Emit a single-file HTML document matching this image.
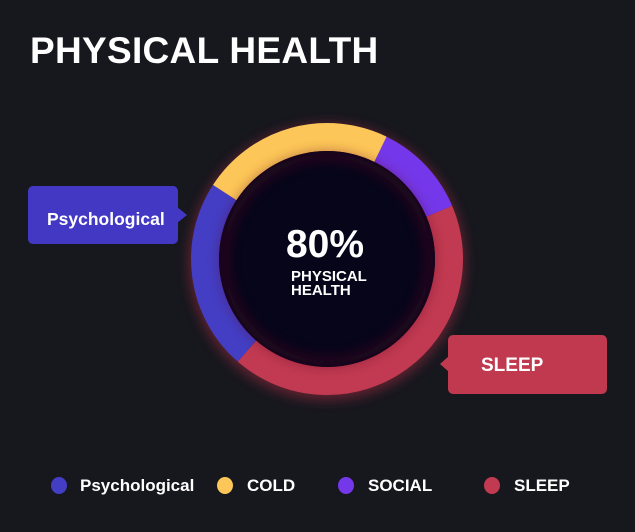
<!DOCTYPE html><html><head><style>
body{margin:0;width:635px;height:532px;background:#17171e;font-family:"Liberation Sans",sans-serif;color:#fff;position:relative;overflow:hidden}
.t{position:absolute;left:30px;top:30px;font-size:37px;font-weight:bold;letter-spacing:0.3px}
.l{position:absolute;top:476px;font-weight:bold;font-size:17px}
.d{position:absolute;top:477px;width:16px;height:17px;border-radius:50%}
</style></head><body>
<div class="t">PHYSICAL HEALTH</div>
<svg width="635" height="532" style="position:absolute;left:0;top:0">
<defs><filter id="g" x="-30%" y="-30%" width="160%" height="160%"><feGaussianBlur stdDeviation="6"/></filter></defs>
<circle cx="327" cy="262" r="128" fill="none" stroke="#c0304a" stroke-width="20" opacity="0.45" filter="url(#g)"/>
<g fill="none" stroke-width="28">
<path d="M224.7 192.6 A122 122 0 0 1 380.5 149.3" stroke="#fdc658"/>
<path d="M380.5 149.3 A122 122 0 0 1 439.3 211.3" stroke="#7438ea"/>
<path d="M439.3 211.3 A122 122 0 0 1 247 351.1" stroke="#c13a51"/>
<path d="M247 351.1 A122 122 0 0 1 224.7 192.6" stroke="#433ec4"/>
</g>
<circle cx="327" cy="259" r="108" fill="#07051a"/>
<circle cx="327" cy="259" r="103" fill="none" stroke="#5a0d24" stroke-width="8" opacity="0.5" filter="url(#g)"/>
<text x="325" y="257" text-anchor="middle" font-family="Liberation Sans" font-weight="bold" font-size="39" fill="#fff">80%</text>
<text x="291" y="281" font-family="Liberation Sans" font-weight="bold" font-size="15" fill="#fff">PHYSICAL</text>
<text x="291" y="295" font-family="Liberation Sans" font-weight="bold" font-size="15" fill="#fff">HEALTH</text>
<rect x="28" y="186" width="150" height="58" rx="5" fill="#4338c4"/>
<path d="M177 207 L187 215 L177 223Z" fill="#4338c4"/>
<rect x="448" y="335" width="159" height="59" rx="5" fill="#c0394f"/>
<path d="M449 356 L440 364 L449 372Z" fill="#c0394f"/>
<text x="47" y="225" font-family="Liberation Sans" font-weight="bold" font-size="17.5" fill="#fff">Psychological</text>
<text x="481" y="371" font-family="Liberation Sans" font-weight="bold" font-size="19" fill="#fff">SLEEP</text>
</svg>
<div class="d" style="left:51px;background:#433ec4"></div><div class="l" style="left:80px">Psychological</div>
<div class="d" style="left:217px;background:#fdc658"></div><div class="l" style="left:247px">COLD</div>
<div class="d" style="left:338px;background:#7438ea"></div><div class="l" style="left:368px">SOCIAL</div>
<div class="d" style="left:484px;background:#c13a51"></div><div class="l" style="left:514px">SLEEP</div>
</body></html>
